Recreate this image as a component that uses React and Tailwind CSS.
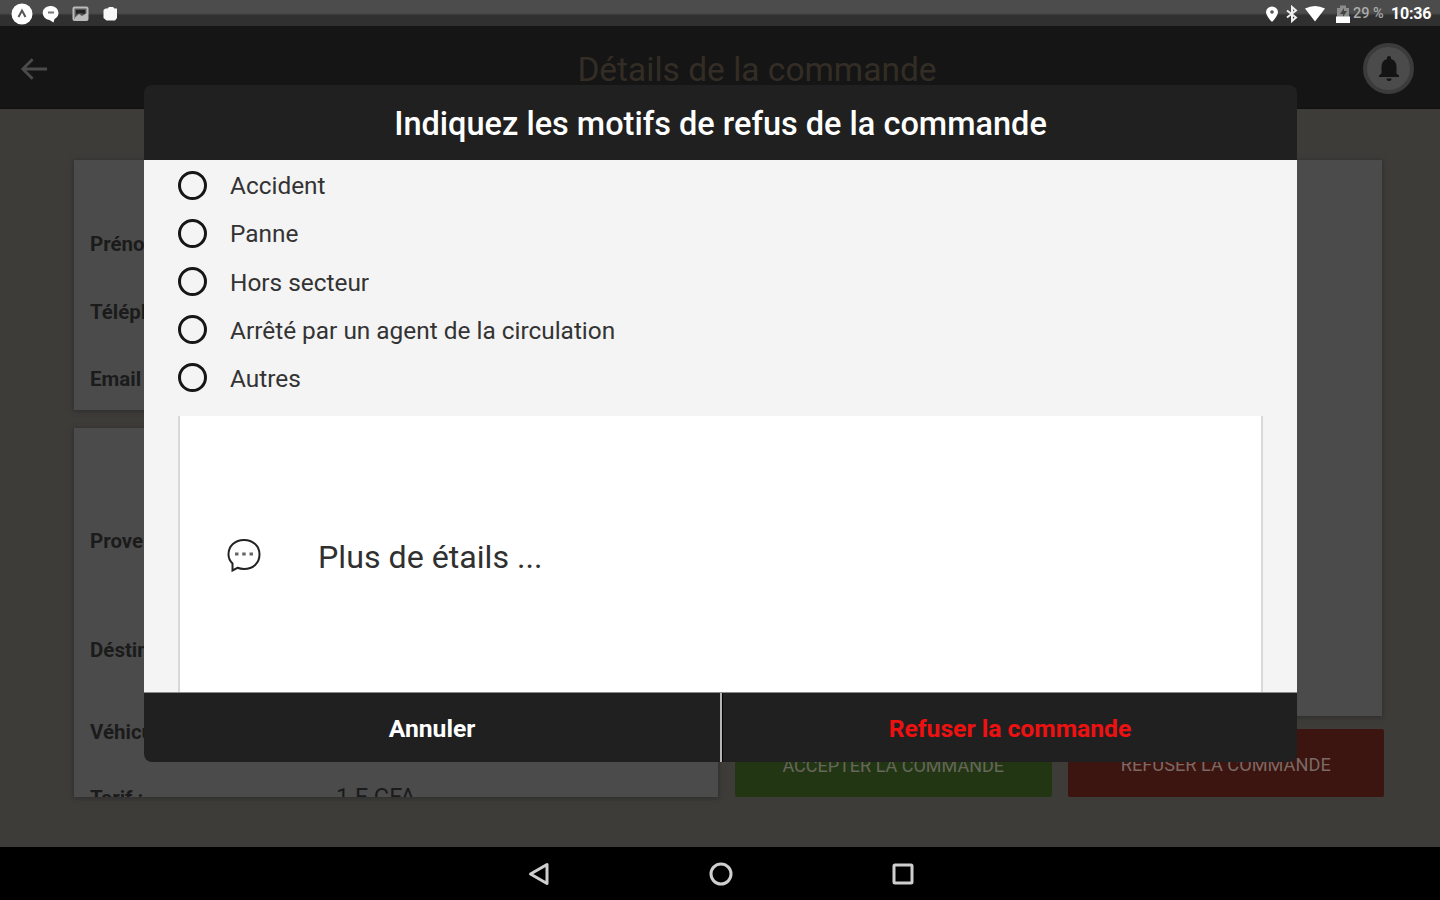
import { useState } from "react";

const REASONS = [
  "Accident",
  "Panne",
  "Hors secteur",
  "Arrêté par un agent de la circulation",
  "Autres",
];

const CLIENT = ["Prénom :", "Téléphone :", "Email :"];

function StatusBar() {
  return (
    <div className="h-[26px] shrink-0 flex items-center justify-between pt-0.5 pl-[11px] pr-2 bg-linear-to-b from-[#4c4c4c] from-50% to-[#303030] to-60% text-white">
      <div className="flex items-center">
        <svg width="22" height="22" viewBox="0 0 22 22">
          <circle cx="11" cy="11" r="10.500" fill="#fff" />
          <path d="M7.500 14 11 7.500l3.500 6.500" fill="none" stroke="#555" strokeWidth="2" />
        </svg>
        <svg className="ml-[9px]" width="18" height="20" viewBox="0 0 18 20">
          <path d="M9 2a7.500 7 0 0 1 7.500 7c0 3-2 5-4 6l-1 3.500L7.500 16A7.500 7 0 0 1 9 2Z" fill="#fff" />
          <path d="M6 8.500h6" stroke="#777" strokeWidth="2" />
        </svg>
        <svg className="ml-3" width="18" height="18" viewBox="0 0 18 18">
          <rect x="1.500" y="2.500" width="14" height="12.500" rx="1" fill="#555" stroke="#bbb" strokeWidth="2" />
          <path d="M3 12.500 7 9l3 2 5-3v6H3Z" fill="#bbb" />
          <path d="M4 5h9v4L8 8 4 9Z" fill="#222" />
        </svg>
        <svg className="ml-3" width="18" height="18" viewBox="0 0 18 18">
          <path d="M3.500 3.500h2L7 2h4l1.500 1.500H15V13l-2 2.500H4.500L1.500 13V5Z" fill="#f7f7f7" />
        </svg>
      </div>
      <div className="flex items-center">
        <svg width="14" height="18" viewBox="0 0 14 18">
          <path d="M7 1.500a6 6 0 0 1 6 5.500C13 11 7 17 7 17S1 11 1 7A6 6 0 0 1 7 1.500Z" fill="#fff" />
          <circle cx="7" cy="7" r="1.800" fill="#555" />
        </svg>
        <svg className="ml-1.5" width="14" height="18" viewBox="0 0 14 18">
          <path d="m2 5.500 9 7L7 16V2l4 3.500-9 7" fill="none" stroke="#eee" strokeWidth="2" />
        </svg>
        <svg className="ml-1.5" width="20" height="18" viewBox="0 0 20 18">
          <path d="M0 3.500q10-5 20 0L10 16.500Z" fill="#fff" />
        </svg>
        <svg className="ml-[11px]" width="14" height="20" viewBox="0 0 14 20">
          <path d="M1 4h3V1.500h6V4h3v14H1Z" fill="#8c8c8c" />
          <path d="m8 4-4 6h3v3l4-6H8Z" fill="#444" />
          <path d="M0 12.500h14V19H0Z" fill="#fff" />
        </svg>
        <span className="ml-[3px] w-[32px] text-[14.500px] leading-none font-medium whitespace-nowrap text-[#aaa]">29 %</span>
        <span className="ml-1.5 w-[41px] text-[16px] leading-none font-bold whitespace-nowrap tracking-[-0.2px]">10:36</span>
      </div>
    </div>
  );
}

function Header() {
  return (
    <div className="h-[83px] shrink-0 flex items-center justify-between bg-[#151515] pt-[3px] pl-5 pr-[26px] border-b border-[#101010]">
      <div className="flex-1">
        <svg width="28" height="26" viewBox="0 0 30 26" fill="none" stroke="#4b4b4b" strokeWidth="3">
          <path d="M29 13H3M13.500 2.500 3 13l10.500 10.500" />
        </svg>
      </div>
      <h1 className="text-[33.500px] leading-10 text-[#332d25] pt-[3px] pl-[80px] whitespace-nowrap">Détails de la commande</h1>
      <div className="flex-1 flex justify-end">
        <div className="size-[51px] rounded-full bg-[#4b4b4b] border-4 border-[#3b3b3b] flex items-center justify-center">
          <svg width="22" height="28" viewBox="0 0 22 28" fill="#141414">
            <path d="M11 1c1.200 0 2 .8 2 2v1c3.500 1 5.500 3.800 5.500 7.500v7l2.500 2V22H1v-1.500l2.500-2v-7C3.500 7.800 5.500 5 9 4V3c0-1.200.8-2 2-2ZM8.500 23.500h5a2.500 2.500 0 0 1-5 0Z" />
          </svg>
        </div>
      </div>
    </div>
  );
}

function OrderPage() {
  return (
    <div className="flex-1 min-h-0 flex gap-[17px] bg-[#3e3c39] pt-[51px] pb-[50px] pl-[74px] pr-[56px] text-[20.500px] text-[#1b1b1b]">
      <div className="w-[644px] flex flex-col gap-[18px]">
        <section className="h-[250px] shrink-0 bg-[#4b4b4b] shadow-[0_1px_4px_1px_#303030] pl-[16px] pt-[51px] font-bold">
          {CLIENT.map(label => (
            <div key={label} className="h-[67.500px] flex items-center">{label}</div>
          ))}
        </section>
        <section className="flex-1 min-h-0 overflow-hidden bg-[#4b4b4b] shadow-[0_1px_4px_1px_#303030] pl-[16px] pt-[59px] font-bold">
          <div className="h-[108px] flex items-center">Provenance :</div>
          <div className="h-[110px] flex items-center">Déstination :</div>
          <div className="h-[54px] flex items-center">Véhicule :</div>
          <div className="h-[78px] flex items-center">
            <span className="w-[246px]">Tarif :</span>
            <span className="text-[23.500px] font-normal">1 F CFA</span>
          </div>
        </section>
      </div>
      <div className="flex-1 flex flex-col gap-[13px]">
        <section className="flex-1 mr-[2px] bg-[#4b4b4b] shadow-[0_1px_4px_1px_#303030]" />
        <div className="h-[68px] flex gap-4 text-[#66665c]">
          <button className="flex-1 rounded-xs bg-[#233614] pt-1 text-[18px] whitespace-nowrap">ACCEPTER LA COMMANDE</button>
          <button className="flex-1 rounded-xs bg-[#3c1410] pt-1 text-[18.200px] whitespace-nowrap text-[#7b6a64]">REFUSER LA COMMANDE</button>
        </div>
      </div>
    </div>
  );
}

function NavBar() {
  return (
    <div className="h-[53px] shrink-0 bg-black flex items-center justify-center gap-[158px] pl-px text-[#cfcfcf]">
      <svg width="24" height="24" viewBox="0 0 24 24" fill="none" stroke="currentColor" strokeWidth="3" strokeLinejoin="round">
        <path d="M20 2.500v19L3.500 12Z" />
      </svg>
      <svg width="24" height="24" viewBox="0 0 24 24" fill="none" stroke="currentColor" strokeWidth="3">
        <circle cx="12" cy="12" r="10" />
      </svg>
      <svg width="24" height="24" viewBox="0 0 24 24" fill="none" stroke="currentColor" strokeWidth="3">
        <rect x="3" y="3" width="18" height="18" rx="1" />
      </svg>
    </div>
  );
}

function RefuseDialog() {
  const [reason, setReason] = useState(null);

  return (
    <div className="absolute left-[144px] top-[85px] w-[1153px] h-[677px] flex flex-col rounded-lg overflow-hidden bg-[#202020]">
      <div className="h-[75px] shrink-0 flex items-center justify-center pt-1">
        <h2 className="text-[32.500px] font-medium text-white whitespace-nowrap">Indiquez les motifs de refus de la commande</h2>
      </div>
      <div className="flex-1 min-h-0 flex flex-col bg-[#f4f4f4] px-[34px]">
        <div className="pt-px">
          {REASONS.map(r => (
            <button
              key={r}
              type="button"
              onClick={() => setReason(r)}
              className="h-[48.200px] flex items-center gap-[23px]"
            >
              <span className="size-[29px] rounded-full border-[3px] border-[#161616] flex items-center justify-center">
                {reason === r && <span className="size-3 rounded-full bg-[#161616]" />}
              </span>
              <span className="pt-[3px] text-[24.400px] text-[#333] whitespace-nowrap">{r}</span>
            </button>
          ))}
        </div>
        <div className="flex-1 mt-[14px] flex items-center bg-white border-x-2 border-[#d8d8d8] pl-[47px]">
          <svg className="mt-0.5" width="34" height="34" viewBox="0 0 34 34" fill="none" stroke="#222" strokeWidth="2">
            <path d="M5.500 25.500C3 23 1.500 20 1.500 16.500 1.500 8 8 2 17 2s15.500 6 15.500 14.500S26 31 17 31q-3.500 0-6.500-1.200L5.500 32.500Z" />
            <path d="M8 16h3.500M15.200 16h3.500M22.500 16h3.500" stroke="#666" strokeWidth="3" />
          </svg>
          <span className="pl-[57px] pt-1.5 text-[32.200px] text-[#303030] whitespace-nowrap">Plus de étails ...</span>
        </div>
      </div>
      <div className="h-[70px] shrink-0 flex border-t border-[#8a8a8a] text-[24.700px] font-bold">
        <button className="w-[576px] pt-[3px] text-white">Annuler</button>
        <div className="w-[3px] bg-[#b4b4b4] border-r border-black" />
        <button className="flex-1 pt-[3px] text-[#ee1111]">Refuser la commande</button>
      </div>
    </div>
  );
}

export default function App() {
  return (
    <div className="relative w-[1440px] h-[900px] flex flex-col overflow-hidden font-[Roboto,sans-serif]">
      <StatusBar />
      <Header />
      <OrderPage />
      <NavBar />
      <RefuseDialog />
    </div>
  );
}
